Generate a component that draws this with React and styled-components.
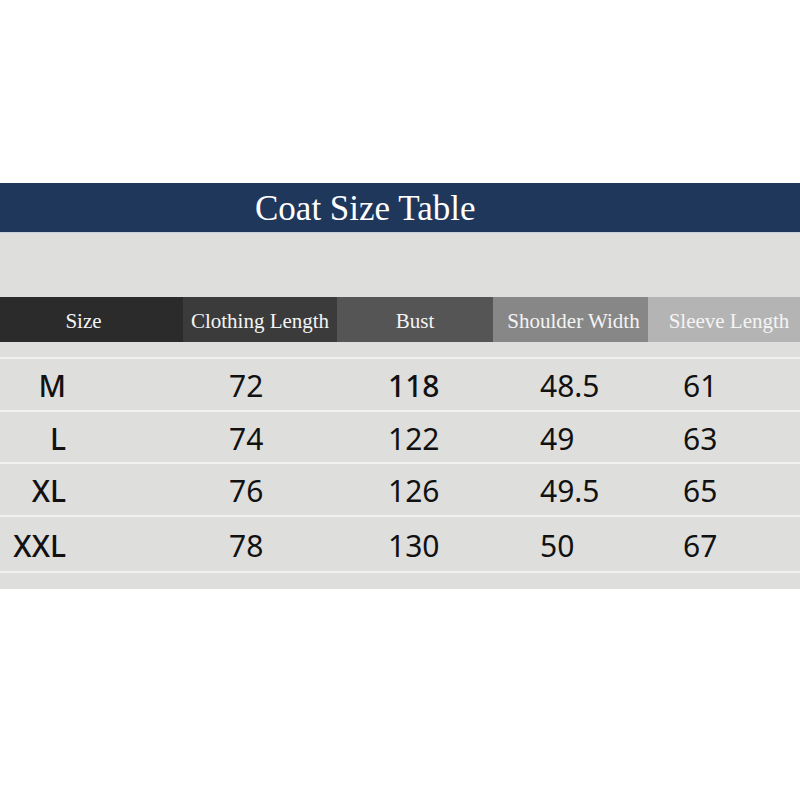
import React from 'react'
import styled, { createGlobalStyle } from "styled-components";

const GlobalStyle = createGlobalStyle`
  html, body {
    margin: 0;
    padding: 0;
    background: #ffffff;
  }
`;

const Page = styled.div`
  width: 800px;
  height: 800px;
  padding-top: 183px;
  box-sizing: border-box;
  background: #ffffff;
`;

const Banner = styled.div`
  height: 50px;
  background: #20375c;
  border-bottom: 1px solid #c9d2dc;
  display: flex;
  align-items: center;
  padding-left: 255px;
  box-sizing: border-box;
`;

const Title = styled.h1`
  margin: 0;
  font-family: "Liberation Serif", "Times New Roman", serif;
  font-weight: 400;
  font-size: 35px;
  color: #ffffff;
  line-height: 1;
  margin-top: 2px;
`;

const Panel = styled.div`
  background: #dededd;
  padding-top: 64px;
  padding-bottom: 16px;
`;

const columns = "183px 154px 156px 155px 152px";

const HeaderRow = styled.div`
  display: grid;
  grid-template-columns: ${columns};
  height: 45px;
  margin-bottom: 15px;
`;

const HeaderCell = styled.div`
  background: ${(props) => props.bg};
  display: flex;
  align-items: center;
  justify-content: center;
  padding: ${(props) => props.pad || "0"};
  padding-top: 4px;
  box-sizing: border-box;
  font-family: "Liberation Serif", "Times New Roman", serif;
  font-size: 21px;
  color: #f4f4f4;
  white-space: nowrap;
`;

const Rows = styled.div`
  border-top: 2px solid #f1f1f1;
`;

const Row = styled.div`
  display: grid;
  grid-template-columns: ${columns};
  height: ${(props) => props.h}px;
  border-bottom: 2px solid #f1f1f1;
`;

const Cell = styled.div`
  display: flex;
  align-items: center;
  justify-content: ${(props) => (props.right ? "flex-end" : "flex-start")};
  padding-left: ${(props) => props.pl || 0}px;
  padding-right: ${(props) => props.pr || 0}px;
  padding-top: 2px;
  font-family: "Noto Sans", "DejaVu Sans", sans-serif;
  font-size: 30px;
  font-weight: ${(props) => props.weight || 400};
  color: #111111;
`;

const headers = [
  { label: "Size", bg: "#2b2b2b", pad: "0 16px 0 0" },
  { label: "Clothing Length", bg: "#3b3b3b" },
  { label: "Bust", bg: "#555555" },
  { label: "Shoulder Width", bg: "#878787", pad: "0 0 0 6px" },
  { label: "Sleeve Length", bg: "#b4b4b4", pad: "0 0 0 10px" },
];

const sizes = [
  { size: "M", length: "72", bust: "118", shoulder: "48.5", sleeve: "61", h: 51 },
  { size: "L", length: "74", bust: "122", shoulder: "49", sleeve: "63", h: 50 },
  { size: "XL", length: "76", bust: "126", shoulder: "49.5", sleeve: "65", h: 51 },
  { size: "XXL", length: "78", bust: "130", shoulder: "50", sleeve: "67", h: 54 },
];

function App() {
  return (
    <>
      <GlobalStyle />
      <Page>
        <Banner>
          <Title>Coat Size Table</Title>
        </Banner>
        <Panel>
          <HeaderRow>
            {headers.map((h) => (
              <HeaderCell key={h.label} bg={h.bg} pad={h.pad}>
                {h.label}
              </HeaderCell>
            ))}
          </HeaderRow>
          <Rows>
            {sizes.map((s) => (
              <Row key={s.size} h={s.h}>
                <Cell right pr={117} weight={500}>{s.size}</Cell>
                <Cell pl={46}>{s.length}</Cell>
                <Cell pl={51} weight={s.bust === "118" ? 500 : 400}>{s.bust}</Cell>
                <Cell pl={47}>{s.shoulder}</Cell>
                <Cell pl={35}>{s.sleeve}</Cell>
              </Row>
            ))}
          </Rows>
        </Panel>
      </Page>
    </>
  )
}

export default App
